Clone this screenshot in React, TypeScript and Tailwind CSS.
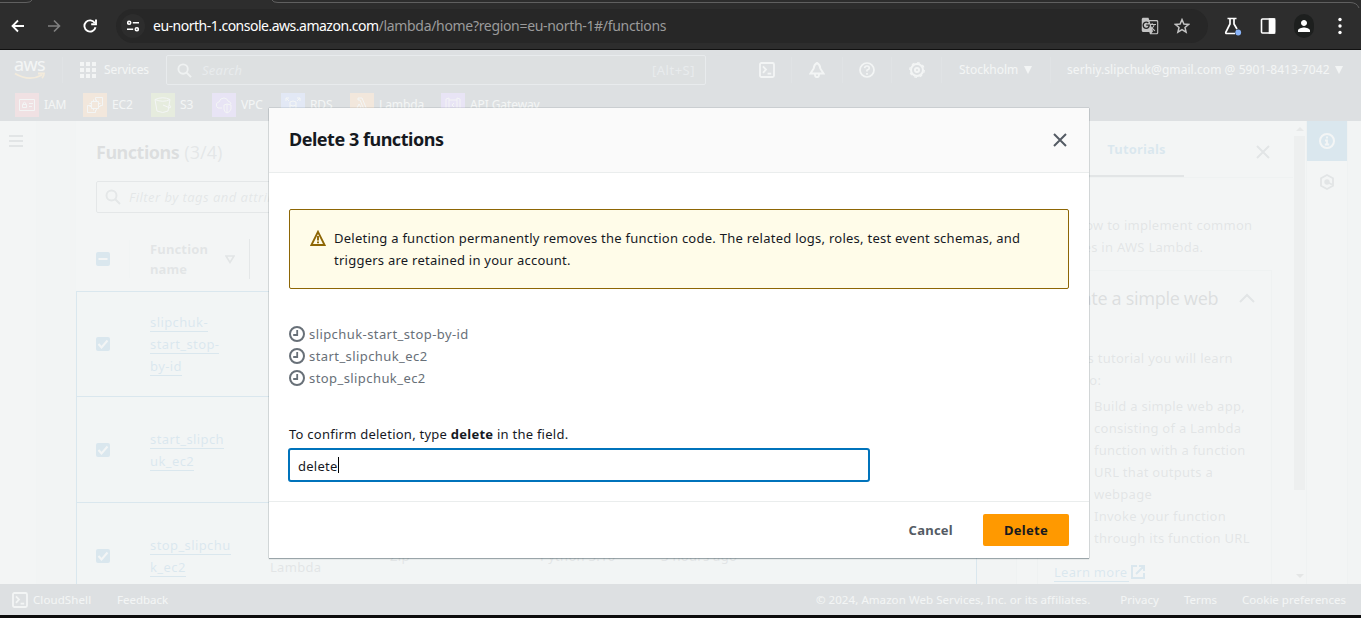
import React from 'react';
import { MdGTranslate, MdPerson } from 'react-icons/md';

type SvgProps = { className?: string };

const SearchIcon = ({ className = '' }: SvgProps) => (
  <svg viewBox="0 0 16 16" className={`shrink-0 fill-none stroke-current ${className}`} strokeWidth="2">
    <circle cx="6.5" cy="6.5" r="5" />
    <path d="M10.2 10.2 15 15" />
  </svg>
);

const CloseIcon = ({ className = '' }: SvgProps) => (
  <svg viewBox="0 0 16 16" className={`h-4 w-4 shrink-0 fill-none stroke-current ${className}`} strokeWidth="2">
    <path d="M2 2 14 14M14 2 2 14" />
  </svg>
);

const ShellIcon = ({ className = '' }: SvgProps) => (
  <svg viewBox="0 0 16 16" className={`h-4 w-4 shrink-0 fill-none stroke-current ${className}`} strokeWidth="1.8">
    <rect x="1" y="1" width="14" height="14" rx="1.5" />
    <path d="M4 4.4 7 7.600 4 10.800M8.600 11.600H12.200" />
  </svg>
);

const Caret = () => (
  <svg viewBox="0 0 8 8" className="h-2 w-2 shrink-0 fill-current">
    <path d="M0 0h8L4 8z" />
  </svg>
);

const ClockIcon = () => (
  <svg viewBox="0 0 16 16" className="h-4 w-4 shrink-0 fill-none stroke-current" strokeWidth="2">
    <circle cx="8" cy="8" r="7" />
    <path d="M8.2 4V9H4.2" strokeWidth="1.8" />
  </svg>
);

function BrowserBar() {
  return (
    <div className="flex h-[50px] shrink-0 flex-col border-b border-[#111] bg-[#2d2d2d] text-white">
      <div className="h-[9px]">
        <svg viewBox="0 0 1361 9" className="h-[9px] w-full fill-none stroke-[#606060]">
          <path d="M0 2.5H26Q31 2.5 32 0M272 0Q273 2.5 278 2.5H1350Q1357 2.5 1359 8" />
        </svg>
      </div>
      <div className="flex h-[34px] items-center">
        <svg viewBox="0 0 14 14" className="ml-[11px] h-3.5 w-3.5 fill-none stroke-white" strokeWidth="1.8">
          <path d="M13 7H2M7 1.5 1.5 7 7 12.5" />
        </svg>
        <svg viewBox="0 0 14 14" className="ml-[22px] h-3.5 w-3.5 fill-none stroke-[#808080]" strokeWidth="1.6">
          <path d="M1 7H12M7 1.5 12.5 7 7 12.5" />
        </svg>
        <svg viewBox="0 0 14 14" className="ml-[22px] h-3.5 w-3.5 fill-none stroke-white" strokeWidth="1.9">
          <path d="M11.8 4A5.6 5.6 0 1 0 12.5 8.2" />
          <path d="M13 .5V5.2H8.2" />
        </svg>
        <div className="ml-[19px] flex h-[34px] w-[1092px] items-center rounded-full bg-[#272727]">
          <div className="ml-[5px] flex h-6 w-6 items-center justify-center rounded-full bg-[#2d2d2d]">
            <svg viewBox="0 0 12 12" className="h-3 w-3 fill-none stroke-white" strokeWidth="1.6">
              <circle cx="2.2" cy="2.8" r="1.5" />
              <path d="M5.8 2.8H12M0 9.3H6.2" />
              <circle cx="9.8" cy="9.3" r="1.5" />
            </svg>
          </div>
          <div className="mb-[2px] ml-2 flex text-[14px] whitespace-nowrap">
            <span className="tracking-[-0.5px]">eu-north-1.console.aws.amazon.com</span>
            <span className="tracking-[-0.32px] text-[#9b9b9b]">/lambda/home?region=eu-north-1#/functions</span>
          </div>
          <MdGTranslate className="mr-[15px] ml-auto h-[18px] w-[18px] text-[#c4c4c4]" />
          <svg viewBox="0 0 16 16" className="mr-[18px] h-4 w-4 fill-none stroke-[#c4c4c4]" strokeWidth="1.5">
            <path d="M8 1.6 9.9 6l4.7.4-3.6 3.1 1.1 4.6L8 11.700 3.900 14.100 5 9.500 1.400 6.400 6.100 6z" />
          </svg>
        </div>
        <svg viewBox="0 0 18 20" className="ml-4 h-5 w-[18px] fill-none stroke-white" strokeWidth="1.7">
          <path d="M3.500 2.500H12.500M6 2.500V8L1.800 16.300Q1.500 17.500 2.700 17.500H11M10 2.500V8L13 13" />
          <circle cx="14.200" cy="16.500" r="2.900" className="fill-[#8ab4f8] stroke-none" />
        </svg>
        <svg viewBox="0 0 16 16" className="ml-[18px] h-4 w-4 fill-none stroke-white" strokeWidth="1.600">
          <rect x="1.500" y="1" width="13" height="14" rx="1" />
          <path d="M9.500 1h5v14h-5z" className="fill-white" />
        </svg>
        <div className="ml-[18px] flex h-6 w-5 items-center justify-center rounded-full bg-[#1d1f1e]">
          <MdPerson className="h-[18px] w-[18px] shrink-0" />
        </div>
        <svg viewBox="0 0 4 18" className="ml-6 h-[18px] w-1 fill-white">
          <circle cx="2" cy="2.500" r="1.700" />
          <circle cx="2" cy="9" r="1.700" />
          <circle cx="2" cy="15.500" r="1.700" />
        </svg>
      </div>
    </div>
  );
}

const Divider = ({ className = '' }: SvgProps) => <div className={`h-[26px] w-px bg-[#414d5c] ${className}`} />;

const favorites = [
  { name: 'IAM', cell: 'w-[68px]', tint: 'bg-[#dd344c]', d: 'M4.500 6.500h15v11h-15zM7.500 11.500h4v3h-4zM8.300 11.500v-1.500q1.200-1.500 2.400 0v1.500M14 10.500h4M14 13.500h3' },
  { name: 'EC2', cell: 'w-[68px]', tint: 'bg-[#ed7100]', d: 'M8 12.500H4.500v7h8V17M12.500 7.500v-3h7v8H17M8.500 8.500h7v7h-7zM10.500 6.500v2M13.500 6.500v2M10.500 15.500v2M13.500 15.500v2M6.500 10.500h2M6.500 13.500h2M15.500 10.500h2M15.500 13.500h2' },
  { name: 'S3', cell: 'w-[61px]', tint: 'bg-[#7aa116]', d: 'M4 6.500Q12 3 19 6.500Q12 10 4 6.500L6 18Q12 21 17 18L19 6.500M12 12l7 3q2-2-1-3' },
  { name: 'VPC', cell: 'w-[69px]', tint: 'bg-[#8c4fff]', d: 'M10 15H6Q4 14 4.500 11Q5 9 7 9Q8 5 12 5Q15 5 16 8Q19 9 19 11M12 12l3-1 4 1v4q-1 3-4 4q-3-1-3-4zM15 11v9' },
  { name: 'RDS', cell: 'w-[69px]', tint: 'bg-[#527fff]', d: 'M5 8V5h3M5 5l3 3M19 8V5h-3M19 5l-3 3M5 16v3h3M5 19l3-3M19 16v3h-3M19 19l-3-3M9 9q3-2 6 0v6q-3 2-6 0zM9 12q3 2 6 0' },
  { name: 'Lambda', cell: 'w-[91px]', tint: 'bg-[#ed7100]', d: 'M8 5h4l5 12h2v2h-4L10 7H8zM9 11l-4 8h4l2-5z' },
  { name: 'API Gateway', cell: 'w-[120px]', tint: 'bg-[#8c4fff]', d: 'M5 6l3-1v14l-3-1zM19 6l-3-1v14l3-1zM8 7h8M8 17h8M13 10l-2 2 2 2' },
];

function AwsNav() {
  return (
    <div className="flex h-[71px] shrink-0 flex-col bg-[#232f3e] text-[12px] text-white">
      <div className="flex h-[40px] shrink-0 items-center whitespace-nowrap">
        <div className="mb-[4px] ml-[14px] flex w-[32px] flex-col text-[18px] leading-[14px] tracking-[-0.6px]">
          <span>aws</span>
          <svg viewBox="0 0 32 8" className="mt-[1px] h-2 w-8 fill-none stroke-[#ff9900]" strokeWidth="1.800">
            <path d="M1 1.500Q15 10 28 3M24 1.500H30Q30 4 28 6" />
          </svg>
        </div>
        <Divider className="ml-4" />
        <svg viewBox="0 0 16 16" className="ml-[17px] h-4 w-4 fill-current">
          <path d="M0 0h4v4H0zM6 0h4v4H6zM12 0h4v4h-4zM0 6h4v4H0zM6 6h4v4H6zM12 6h4v4h-4zM0 12h4v4H0zM6 12h4v4H6zM12 12h4v4h-4z" />
        </svg>
        <span className="ml-2 w-[62px] tracking-[-0.1px]">Services</span>
        <div className="flex h-[30px] w-[540px] items-center rounded-[2px] border border-[#8d99a8] bg-[#232b37] px-[10px] text-[13px] text-[#8d99a8]">
          <SearchIcon className="h-[15px] w-[15px] text-[#d5dbdb]" />
          <span className="mt-[2px] ml-[10px] tracking-[0.250px] italic">Search</span>
          <span className="mt-[2px] ml-auto tracking-[0.500px]">[Alt+S]</span>
        </div>
        <ShellIcon className="ml-[53px]" />
        <Divider className="ml-4" />
        <svg viewBox="0 0 16 16" className="ml-[17px] h-4 w-4 fill-none stroke-white" strokeWidth="1.900">
          <path d="M8 .8Q5 2.500 4.700 6.500L1.500 11.500H14.500L11.300 6.500Q11 2.500 8 .8zM5.800 12Q6 15.200 8 15.200Q10 15.200 10.200 12" />
        </svg>
        <Divider className="ml-[17px]" />
        <svg viewBox="0 0 16 16" className="ml-4 h-4 w-4 fill-none stroke-white" strokeWidth="1.700">
          <circle cx="8" cy="8" r="7" />
          <path d="M5.600 6.200Q5.800 4 8 4Q10.300 4 10.300 6.100Q10.300 7.500 8 8.300V9.500M8 11V12.700" />
        </svg>
        <Divider className="ml-4" />
        <svg viewBox="0 0 16 16" className="ml-[17px] h-4 w-4 fill-none stroke-white" strokeWidth="2">
          <circle cx="8" cy="8" r="6" />
          <circle cx="8" cy="8" r="2" />
          <circle cx="8" cy="8" r="7.300" strokeWidth="1.200" strokeDasharray="2.800 2.930" />
        </svg>
        <Divider className="ml-4" />
        <span className="ml-[17px] w-[65px]">Stockholm</span>
        <Caret />
        <Divider className="ml-[18px]" />
        <span className="ml-4 w-[268px] tracking-[0.06px]">serhiy.slipchuk@gmail.com @ 5901-8413-7042</span>
        <Caret />
      </div>
      <div className="flex items-center pt-[3px] pl-[15px]">
        {favorites.map((f) => (
          <div key={f.name} className={`flex shrink-0 items-center gap-[5px] whitespace-nowrap ${f.cell}`}>
            <svg viewBox="0 0 24 24" className={`h-6 w-6 shrink-0 fill-none stroke-white ${f.tint}`}>
              <path d={f.d} />
            </svg>
            <span className="tracking-[-0.1px]">{f.name}</span>
          </div>
        ))}
      </div>
    </div>
  );
}

const Checkbox = ({ mixed = false }: { mixed?: boolean }) => (
  <svg viewBox="0 0 14 14" className="h-3.5 w-3.5 shrink-0 rounded-[2px] bg-[#0073bb] fill-none stroke-white" strokeWidth="2">
    <path d={mixed ? 'M2.500 7H11.500' : 'M2.500 7 5.500 10.500 11.500 3.500'} />
  </svg>
);

const rows = [
  { name: ['slipchuk-', 'start_stop-', 'by-id'], height: 'h-[105px]', cells: [] },
  { name: ['start_slipch', 'uk_ec2'], height: 'h-[106px]', cells: [] },
  { name: ['stop_slipchu', 'k_ec2'], height: 'h-[106px]', cells: ['Zip', 'Python 3.10', '3 hours ago'] },
];

function FunctionsTable() {
  return (
    <div className="flex w-[902px] shrink-0 flex-col border-l border-[#eaeded] bg-white">
      <div className="flex h-[60px] shrink-0 items-center gap-[5px] pt-[2px] pl-5 text-[18px] tracking-[-0.3px] text-[#16191f]">
        <b className="tracking-[-0.500px]">Functions</b>
        <span className="tracking-[0px] text-[#687078]">(3/4)</span>
      </div>
      <div className="ml-5 flex h-8 w-[400px] shrink-0 items-center rounded-[2px] border border-[#687078] pl-2 text-[13px] tracking-[0.450px] text-[#687078] italic">
        <SearchIcon className="h-4 w-4" />
        <span className="mt-[2px] ml-2">Filter by tags and attributes</span>
      </div>
      <div className="mt-[26px] flex h-[40px] shrink-0 items-center pl-5">
        <Checkbox mixed />
        <div className="ml-[19px] h-[38px] w-px bg-[#eaeded]" />
        <b className="ml-5 w-[75px] text-[13px] leading-[20px] tracking-[0.150px] text-[#545b64]">
          Function
          <br />
          name
        </b>
        <svg viewBox="0 0 10 9" className="h-[9px] w-[10px] fill-none stroke-[#545b64]" strokeWidth="1.600">
          <path d="M1 1H9L5 7.500z" />
        </svg>
        <div className="ml-[14px] h-10 w-px bg-[#687078]" />
      </div>
      <div className="mt-3 flex flex-col">
        {rows.map((row) => (
          <div
            key={row.name[0]}
            className={`flex shrink-0 items-center border-t border-r border-l border-[#0073bb] bg-[#f1faff] pl-[19px] text-[13px] leading-[22px] tracking-[0.300px] text-[#545b64] ${row.height}`}
          >
            <Checkbox />
            <div className="ml-10 flex w-[120px] flex-col items-start tracking-[0.400px] text-[#0073bb]">
              {row.name.map((l) => (
                <span key={l} className="h-[22px]">
                  <span className="block h-[21px] border-b border-[#0073bb]">{l}</span>
                </span>
              ))}
            </div>
            {row.cells.length > 0 && (
              <>
                <div className="w-[120px]">
                  AWS
                  <br />
                  Lambda
                </div>
                <span className="w-[150px]">{row.cells[0]}</span>
                <span className="w-[121px]">{row.cells[1]}</span>
                <span>{row.cells[2]}</span>
              </>
            )}
          </div>
        ))}
      </div>
    </div>
  );
}

function TutorialsPanel() {
  return (
    <div className="flex w-[277px] shrink-0 flex-col border-l border-[#d5dbdb] bg-white text-[13px] leading-[22px] tracking-[0.270px] text-[#545b64]">
      <div className="flex h-[57px] shrink-0 border-b border-[#d5dbdb]">
        <b className="ml-5 w-[52px] pt-[17px]">Info</b>
        <div className="flex h-[56px] w-[95px] justify-center border-b-2 border-[#545b64] pt-[17px] pl-0">
          <b className="tracking-[0.150px] text-[#0073bb]">Tutorials</b>
        </div>
        <CloseIcon className="mt-[23px] ml-[71px] text-[#545b64]" />
      </div>
      <p className="mt-9 ml-5 whitespace-nowrap">
        Learn how to implement common
        <br />
        use cases in AWS Lambda.
      </p>
      <div className="mt-3 ml-5 flex h-[400px] w-[235px] shrink-0 flex-col border border-[#d5dbdb] pl-4">
        <div className="mt-[13px] flex h-7 items-center text-[18px] text-[#16191f]">
          <span className="w-[185px] tracking-[-0.350px] whitespace-nowrap">Create a simple web</span>
          <svg viewBox="0 0 16 10" className="h-[10px] w-4 fill-none stroke-[#545b64]" strokeWidth="2">
            <path d="M1 9 8 2 15 9" />
          </svg>
        </div>
        <p className="mt-[35px] whitespace-nowrap">
          In this tutorial you will learn
          <br />
          how to:
        </p>
        <div className="mt-1 ml-10 whitespace-nowrap">
          Build a simple web app,
          <br />
          consisting of a Lambda
          <br />
          function with a function
          <br />
          URL that outputs a
          <br />
          webpage
          <br />
          Invoke your function
          <br />
          through its function URL
        </div>
        <div className="mt-3 flex items-center gap-[2px] text-[#0073bb]">
          <span className="block h-[21px] w-[75px] border-b border-[#0073bb]">Learn more</span>
          <svg viewBox="0 0 14 14" className="h-3.5 w-3.5 fill-none stroke-current" strokeWidth="2">
            <path d="M6 1H1V13H13V8M8 1H13V6M13 1 5 9" />
          </svg>
        </div>
      </div>
    </div>
  );
}

function ConsoleBody() {
  return (
    <div className="flex h-[463px] shrink-0 overflow-hidden bg-[#f2f3f3]">
      <div className="w-[37px] shrink-0 border-r border-[#eaeded] bg-white pt-[14px] pl-[9px]">
        <svg viewBox="0 0 14 12" className="h-3 w-3.5 fill-[#545b64]">
          <path d="M0 0h14v2H0zM0 5h14v2H0zM0 10h14v2H0z" />
        </svg>
      </div>
      <div className="w-[38px] shrink-0" />
      <FunctionsTable />
      <div className="w-[39px] shrink-0" />
      <TutorialsPanel />
      <div className="flex w-[13px] shrink-0 flex-col items-center bg-[#f8f8f8]">
        <svg viewBox="0 0 8 4" className="mt-[6px] h-1 w-2 fill-[#888]">
          <path d="M0 4 4 0 8 4z" />
        </svg>
        <div className="mt-[5px] h-[354px] w-[11px] bg-[#c1c1c1]" />
        <svg viewBox="0 0 8 4" className="mt-auto mb-[6px] h-1 w-2 fill-[#666]">
          <path d="M0 0h8L4 4z" />
        </svg>
      </div>
      <div className="flex w-[42px] shrink-0 flex-col items-center border-r border-l border-[#d5dbdb] bg-white">
        <div className="flex h-10 w-10 items-center justify-center bg-[#0073bb]">
          <svg viewBox="0 0 16 16" className="h-4 w-4 fill-none stroke-white" strokeWidth="2">
            <circle cx="8" cy="8" r="7" />
            <path d="M8 3.500V5.500M6 7.500H8V12M5.800 11.500H10.200" strokeWidth="1.800" />
          </svg>
        </div>
        <svg viewBox="0 0 16 16" className="mt-[13px] h-4 w-4 fill-none stroke-[#545b64]" strokeWidth="1.800">
          <path d="M8 1 14 4.300V11.700L8 15 2 11.700V4.300z" />
          <circle cx="8" cy="8" r="1.800" className="fill-[#545b64]" />
          <path d="M8 8 13 10.500" />
        </svg>
      </div>
    </div>
  );
}

function Footer() {
  return (
    <div className="flex h-[31px] shrink-0 items-center bg-[#232f3e] text-[11.500px] whitespace-nowrap text-white">
      <ShellIcon className="ml-3" />
      <span className="ml-[5px] w-[84px] tracking-[0.100px]">CloudShell</span>
      <span>Feedback</span>
      <span className="ml-auto tracking-[0.070px]">© 2024, Amazon Web Services, Inc. or its affiliates.</span>
      <span className="ml-[30px] tracking-[0.050px]">Privacy</span>
      <span className="ml-[25px]">Terms</span>
      <span className="mr-[15px] ml-[25px]">Cookie preferences</span>
    </div>
  );
}

function DeleteModal() {
  return (
    <div className="absolute top-[108px] left-[269px] flex h-[450px] w-[820px] flex-col bg-white text-[13px] leading-[22px] tracking-[0.250px] text-[#16191f] shadow-[0_1px_1px_0_rgba(0,28,36,0.3),0_0_1px_0_rgba(0,28,36,0.5)]">
      <div className="flex h-[65px] shrink-0 items-center justify-between border-b border-[#eaeded] bg-[#fafafa] px-5">
        <h2 className="mb-[2px] text-[18px] font-bold tracking-[-0.480px]">Delete 3 functions</h2>
        <CloseIcon className="mr-[1px] text-[#545b64]" />
      </div>
      <div className="flex grow flex-col px-5 pt-9">
        <div className="flex h-[80px] rounded-[2px] border border-[#8d6605] bg-[#fffce9] pt-[17px] pl-5">
          <svg viewBox="0 0 16 16" className="mt-[3px] mr-2 h-4 w-4 shrink-0 fill-none stroke-[#8d6605]" strokeWidth="1.900">
            <path d="M8 1.800 14.600 15H1.400z" />
            <path d="M8 6V10.500M8 11.500V13.200" />
          </svg>
          <p className="whitespace-nowrap">
            Deleting a function permanently removes the function code. The related logs, roles, test event schemas, and
            <br />
            triggers are retained in your account.
          </p>
        </div>
        <ul className="mt-[34px] tracking-[0.420px] text-[#687078]">
          {['slipchuk-start_stop-by-id', 'start_slipchuk_ec2', 'stop_slipchuk_ec2'].map((n) => (
            <li key={n} className="flex items-center gap-1">
              <ClockIcon />
              {n}
            </li>
          ))}
        </ul>
        <label className="mt-[34px]">
          To confirm deletion, type <b>delete</b> in the field.
        </label>
        <div className="mt-[3px] -ml-px flex h-[34px] w-[582px] items-center rounded-[3px] border-2 border-[#0073bb] pl-2">
          <span className="mt-[2px]">delete</span>
          <span className="h-4 w-px bg-black" />
        </div>
      </div>
      <div className="flex h-[57px] shrink-0 items-center justify-end border-t border-[#eaeded] px-5 font-bold">
        <span className="mr-[30px] text-[#545b64]">Cancel</span>
        <button className="h-8 w-[86px] rounded-[2px] bg-[#ff9900] text-[#16191f]">Delete</button>
      </div>
    </div>
  );
}

export default function App() {
  return (
    <div className="relative flex h-[618px] w-[1361px] flex-col overflow-hidden bg-[#0c0c0c] font-['Noto_Sans',sans-serif]">
      <BrowserBar />
      <div className="relative flex flex-col">
        <AwsNav />
        <ConsoleBody />
        <Footer />
        <div className="absolute inset-0 bg-[#f2f4f4]/90" />
      </div>
      <DeleteModal />
    </div>
  );
}
